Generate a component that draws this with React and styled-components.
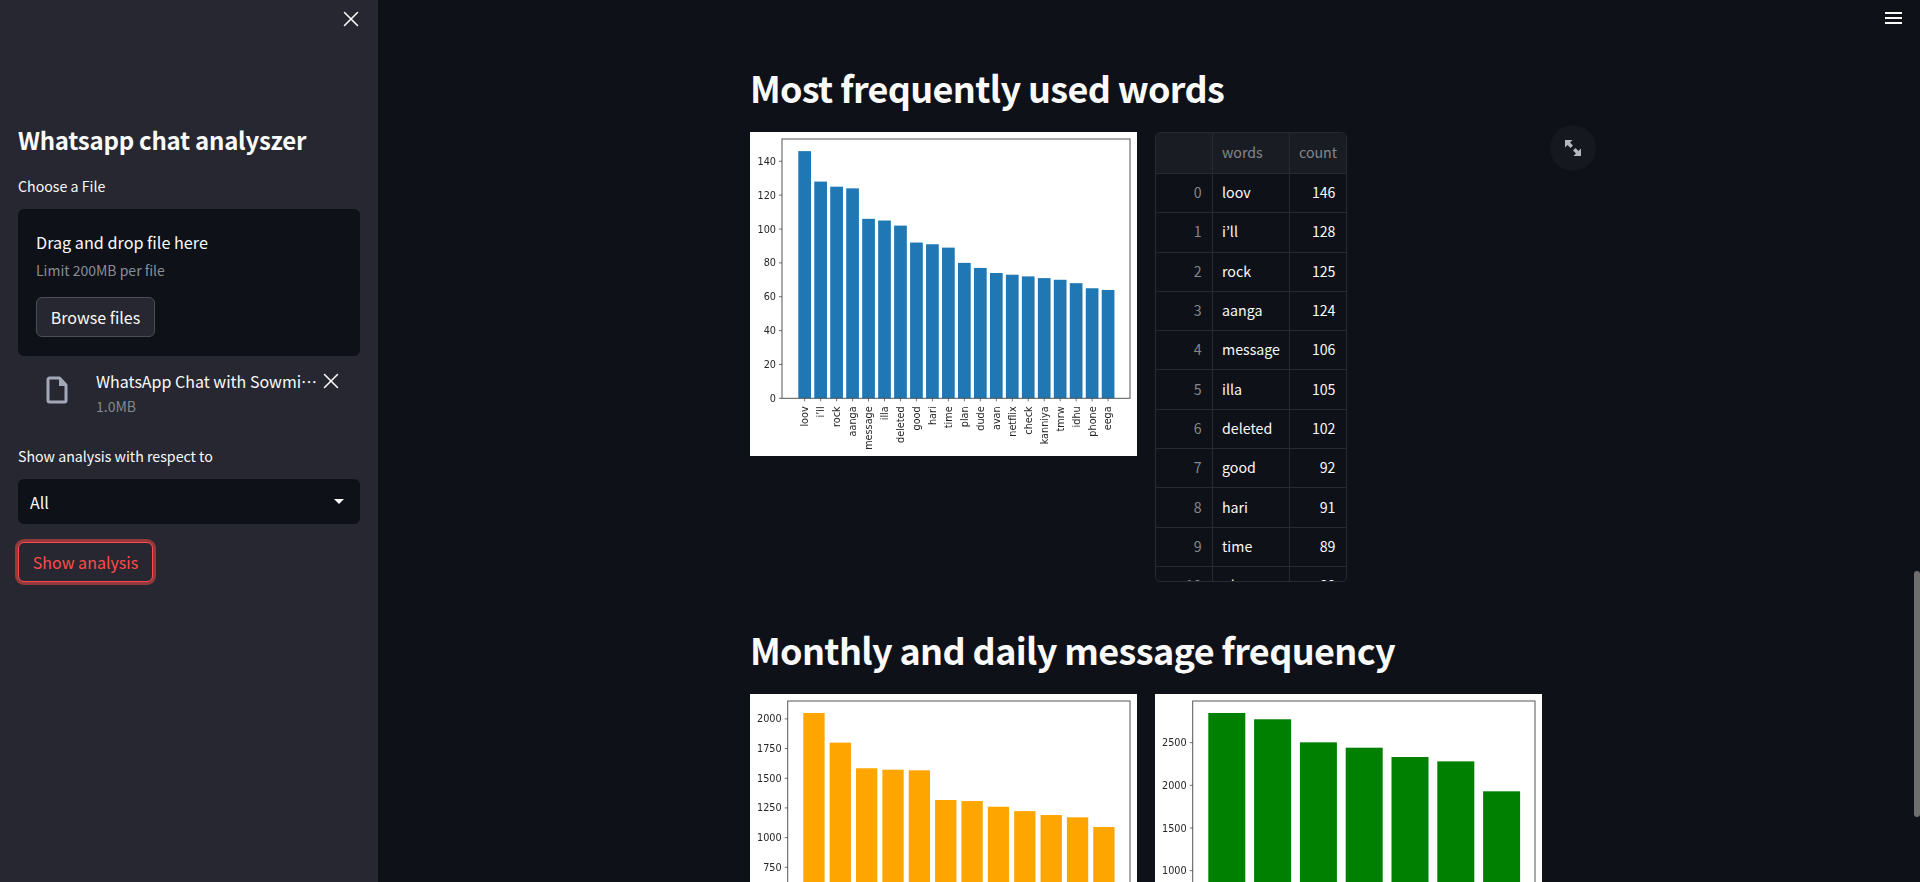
import React from 'react';
import styled, { createGlobalStyle } from 'styled-components';
import { X } from 'lucide-react';

const GlobalStyle = createGlobalStyle`
  html, body {
    margin: 0;
    height: 100%;
    overflow: hidden;
    background: #0e1117;
  }
  * {
    box-sizing: border-box;
  }
  body {
    font-family: "Noto Sans CJK KR", "Noto Sans", sans-serif;
    font-feature-settings: "palt";
    color: #fafafa;
  }
`;

const Page = styled.div`
  display: flex;
  height: 882px;
  overflow: hidden;
`;

const Sidebar = styled.aside`
  width: 378px;
  flex: none;
  background: #262730;
  padding: 0 18px;
  display: flex;
  flex-direction: column;
`;

const CloseRow = styled.div`
  height: 38px;
  display: flex;
  align-items: center;
  justify-content: flex-end;
  margin-right: -4px;
  margin-bottom: 83px;
`;

const SideTitle = styled.h2`
  margin: 0 0 15px;
  font-size: 24px;
  line-height: 38px;
  font-weight: 600;
  letter-spacing: -0.25px;
`;

const FieldLabel = styled.div`
  font-size: 14.2px;
  line-height: 24px;
  height: 24px;
  margin-bottom: 11px;
`;

const Dropzone = styled.div`
  height: 147px;
  background: #0e1117;
  border-radius: 6px;
  padding: 20px 18px;
`;

const DropTitle = styled.div`
  font-size: 16.2px;
  line-height: 26px;
`;

const DropHint = styled.div`
  font-size: 14px;
  line-height: 24px;
  margin-top: 3px;
  color: #8b8d93;
`;

const BrowseButton = styled.button`
  display: block;
  margin-top: 15px;
  width: 119px;
  height: 40px;
  background: #262730;
  color: #fafafa;
  border: 1px solid #4c4e57;
  border-radius: 6px;
  font: inherit;
  font-size: 16px;
  padding: 0;
`;

const FileRow = styled.div`
  display: flex;
  align-items: flex-start;
  padding: 12px 0 0 27px;
  height: 88px;
`;

const FileIconBox = styled.div`
  width: 51px;
  height: 44px;
  flex: none;
  display: flex;
  align-items: center;
  color: #a3a8b8;
`;

const FileInfo = styled.div`
  width: 223px;
  flex: none;
`;

const FileName = styled.div`
  font-size: 16px;
  line-height: 26px;
  white-space: nowrap;
  overflow: hidden;
  text-overflow: ellipsis;
`;

const FileSize = styled.div`
  font-size: 14px;
  line-height: 24px;
  color: #85878e;
`;

const FileRemove = styled.div`
  height: 26px;
  display: flex;
  align-items: center;
  margin-left: -1px;
`;

const SelectBox = styled.div`
  height: 45px;
  background: #0e1117;
  border-radius: 6px;
  padding: 0 12px;
  display: flex;
  align-items: center;
  justify-content: space-between;
  font-size: 16px;
`;

const Caret = styled.span`
  width: 0;
  height: 0;
  margin-right: 4px;
  border-left: 5px solid transparent;
  border-right: 5px solid transparent;
  border-top: 5px solid #fafafa;
`;

const AnalysisButton = styled.button`
  align-self: flex-start;
  width: 135px;
  height: 40px;
  margin-top: 18px;
  background: #262730;
  color: #ff4b4b;
  border: 1px solid #ff4b4b;
  border-radius: 6px;
  box-shadow: 0 0 0 3px rgba(255, 75, 75, 0.5);
  font: inherit;
  font-size: 16px;
  padding: 0;
`;

const Main = styled.main`
  flex: 1;
  position: relative;
  padding-right: 6px;
  display: flex;
  justify-content: center;
`;

const Content = styled.div`
  width: 792px;
  flex: none;
  padding-top: 60px;
`;

const Heading = styled.h1`
  margin: 0 0 17px;
  font-size: 36px;
  line-height: 55px;
  font-weight: 600;
  letter-spacing: -0.65px;
  white-space: nowrap;
`;

const Columns = styled.div`
  display: flex;
  align-items: flex-start;
  gap: 18px;
  margin-bottom: 40px;
`;

const ChartFrame = styled.svg`
  display: block;
  width: 387px;
  flex: none;
  background: #fff;
  filter: blur(0.35px);
`;

const TableBox = styled.div`
  width: 192px;
  height: 450px;
  flex: none;
  border: 1px solid #272a31;
  border-radius: 5px;
  overflow: hidden;
  font-size: 14.2px;
`;

const TableRow = styled.div`
  display: grid;
  grid-template-columns: 56px 77px 1fr;
  height: ${p => (p.$head ? '41px' : '39.3px')};
  background: ${p => (p.$head ? '#1a1c24' : 'transparent')};
  border-bottom: 1px solid #272a31;
`;

const Cell = styled.div`
  display: flex;
  align-items: center;
  padding: 0 10.5px 2px 9px;
  white-space: nowrap;
  justify-content: ${p => (p.$right ? 'flex-end' : 'flex-start')};
  color: ${p => (p.$muted ? '#85878c' : '#fafafa')};
  border-left: ${p => (p.$first ? 'none' : '1px solid #272a31')};
`;

const ExpandButton = styled.div`
  position: absolute;
  left: 1172px;
  top: 125px;
  width: 46px;
  height: 46px;
  border-radius: 50%;
  background: #15181f;
  display: flex;
  align-items: center;
  justify-content: center;
`;

const MenuButton = styled.svg`
  position: absolute;
  right: 18px;
  top: 12px;
  width: 17px;
  height: 12px;
  fill: #fafafa;
`;

const ScrollThumb = styled.div`
  position: absolute;
  right: 0;
  top: 571px;
  width: 6px;
  height: 246px;
  border-radius: 3px;
  background: #6e6e6e;
`;

const tickColor = '#262626';
const chartFont = 'DejaVu Sans, Verdana, sans-serif';

const BarChart = ({ height, axisLeft, axisBottom, scale, ticks, values, barX, barW, pitch, color, labels }) => {
  return (
    <ChartFrame viewBox={`0 0 387 ${height}`} height={height}>
      {values.map((v, i) => (
        <rect key={i} x={barX + i * pitch} y={axisBottom - v * scale} width={barW} height={v * scale} fill={color} />
      ))}
      <rect x={axisLeft} y={7} width={380 - axisLeft} height={axisBottom - 7} fill="none" stroke="#555" strokeWidth="1" />
      {ticks.map(t => (
        <g key={t}>
          <line x1={axisLeft - 3} x2={axisLeft} y1={axisBottom - t * scale} y2={axisBottom - t * scale} stroke="#333" strokeWidth="0.7" />
          <text x={axisLeft - 6} y={axisBottom - t * scale + 3.5} textAnchor="end" fontSize="9.7" fontFamily={chartFont} fill={tickColor}>{t}</text>
        </g>
      ))}
      {labels && labels.map((l, i) => {
        const cx = barX + i * pitch + barW / 2;
        return (
          <g key={l}>
            <line x1={cx} x2={cx} y1={axisBottom} y2={axisBottom + 3} stroke="#333" strokeWidth="0.7" />
            <text transform={`translate(${cx + 3.4} ${axisBottom + 8}) rotate(-90)`} textAnchor="end" fontSize="9.7" fontFamily={chartFont} fill={tickColor}>{l}</text>
          </g>
        );
      })}
    </ChartFrame>
  );
};

const words = [
  ['loov', 146], ['i’ll', 128], ['rock', 125], ['aanga', 124], ['message', 106],
  ['illa', 105], ['deleted', 102], ['good', 92], ['hari', 91], ['time', 89],
  ['plan', 80], ['dude', 77], ['avan', 74], ['netflix', 73], ['check', 72],
  ['kanniya', 71], ['tmrw', 70], ['idhu', 68], ['phone', 65], ['eega', 64],
];

const monthly = [2050, 1800, 1584, 1572, 1567, 1317, 1308, 1260, 1223, 1190, 1171, 1089];
const daily = [2848, 2774, 2504, 2441, 2332, 2281, 1930];

const App = () => {
  return (
    <Page>
      <GlobalStyle />
      <Sidebar>
        <CloseRow>
          <X size={26} strokeWidth={1.4} color="#fafafa" />
        </CloseRow>
        <SideTitle>Whatsapp chat analyszer</SideTitle>
        <FieldLabel>Choose a File</FieldLabel>
        <Dropzone>
          <DropTitle>Drag and drop file here</DropTitle>
          <DropHint>Limit 200MB per file</DropHint>
          <BrowseButton>Browse files</BrowseButton>
        </Dropzone>
        <FileRow>
          <FileIconBox>
            <svg width="24" height="30" viewBox="0 0 24 30" fill="none" stroke="currentColor" strokeWidth="3">
              <path d="M4.5 3h10l6.5 7v15.500a1.500 1.500 0 0 1-1.500 1.500h-15A1.500 1.500 0 0 1 3 25.500v-21A1.500 1.500 0 0 1 4.500 3z" strokeLinejoin="round" />
              <path d="M14 3l8 8h-8z" fill="currentColor" stroke="none" />
            </svg>
          </FileIconBox>
          <FileInfo>
            <FileName>WhatsApp Chat with Sowmiya.txt</FileName>
            <FileSize>1.0MB</FileSize>
          </FileInfo>
          <FileRemove>
            <X size={26} strokeWidth={1.4} color="#fafafa" />
          </FileRemove>
        </FileRow>
        <FieldLabel>Show analysis with respect to</FieldLabel>
        <SelectBox>
          All
          <Caret />
        </SelectBox>
        <AnalysisButton>Show analysis</AnalysisButton>
      </Sidebar>
      <Main>
        <Content>
          <Heading>Most frequently used words</Heading>
          <Columns>
            <BarChart
              height={324}
              axisLeft={32}
              axisBottom={266.3}
              scale={1.693}
              ticks={[0, 20, 40, 60, 80, 100, 120, 140]}
              values={words.map(w => w[1])}
              labels={words.map(w => w[0])}
              barX={48.3}
              barW={12.7}
              pitch={15.97}
              color="#1f77b4"
            />
            <TableBox>
              <TableRow $head>
                <Cell $first />
                <Cell $muted>words</Cell>
                <Cell $muted $right>count</Cell>
              </TableRow>
              {words.slice(0, 11).map(([word, count], i) => (
                <TableRow key={word}>
                  <Cell $first $muted $right>{i}</Cell>
                  <Cell>{word}</Cell>
                  <Cell $right>{count}</Cell>
                </TableRow>
              ))}
            </TableBox>
          </Columns>
          <Heading>Monthly and daily message frequency</Heading>
          <Columns>
            <BarChart
              height={324}
              axisLeft={37.7}
              axisBottom={262.3}
              scale={0.1187}
              ticks={[750, 1000, 1250, 1500, 1750, 2000]}
              values={monthly}
              barX={53.3}
              barW={21.3}
              pitch={26.36}
              color="orange"
            />
            <BarChart
              height={324}
              axisLeft={37.7}
              axisBottom={262}
              scale={0.08533}
              ticks={[1000, 1500, 2000, 2500]}
              values={daily}
              barX={53.3}
              barW={37}
              pitch={45.8}
              color="green"
            />
          </Columns>
        </Content>
        <ExpandButton>
          <svg width="20" height="20" viewBox="0 0 20 20" fill="#b6b8bd">
            <path d="M2 2h7.500L7 4.500 10 7.500 7.500 10l-3-3L2 9.500z" />
            <path d="M18 18h-7.500L13 15.500 10 12.500 12.500 10l3 3L18 10.500z" />
          </svg>
        </ExpandButton>
        <MenuButton viewBox="0 0 17 12">
          <rect x="0" y="0" width="17" height="2" />
          <rect x="0" y="5" width="17" height="2" />
          <rect x="0" y="10" width="17" height="2" />
        </MenuButton>
        <ScrollThumb />
      </Main>
    </Page>
  );
};

export default App;
